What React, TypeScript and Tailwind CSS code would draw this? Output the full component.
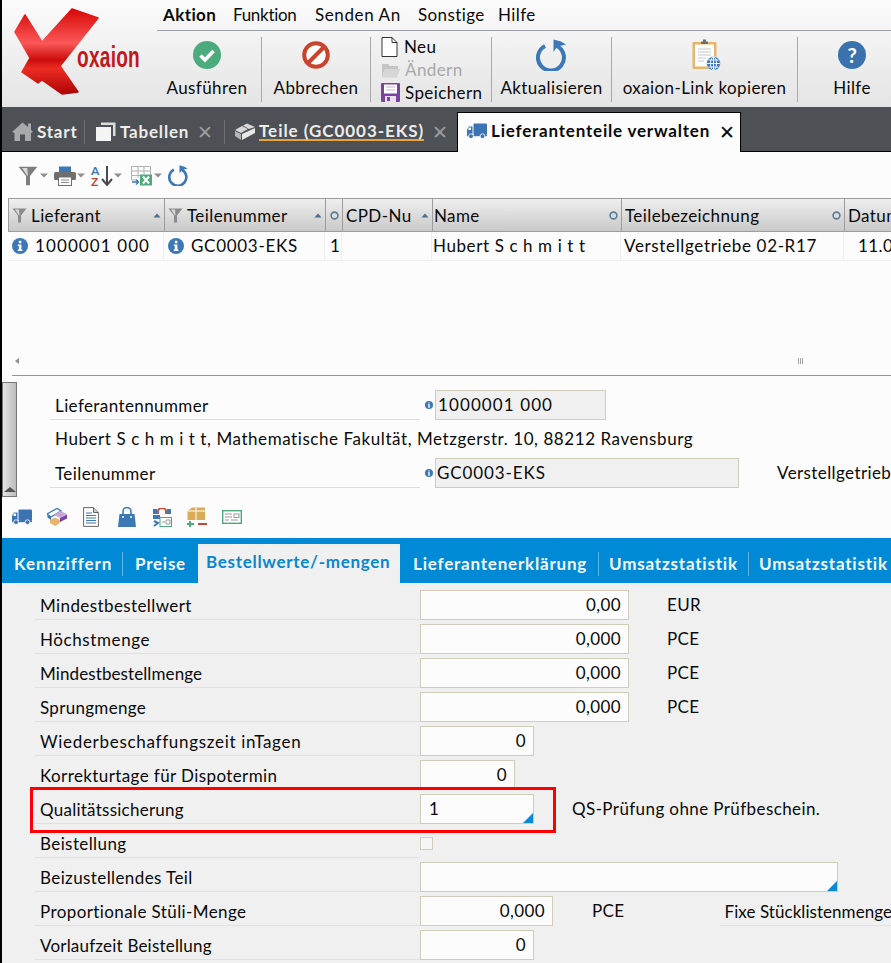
import React from "react";

const Truck = ({ w = 20, h = 16 }: { w?: number; h?: number }) => (
  <svg width={w} height={h} viewBox="0 0 20 16" className="shrink-0">
    <rect x="6.5" y="0.5" width="13.5" height="11.5" rx="1" fill="#3c74b3" />
    <path d="M0 12V6.5L2 3.5H5.5V12Z" fill="#3c74b3" />
    <path d="M1.5 7V5L2.7 4.5H4V7Z" fill="#fff" />
    <rect x="0" y="12" width="20" height="1.2" fill="#3c74b3" />
    <circle cx="4" cy="13.2" r="2.4" fill="#3c74b3" stroke="#fff" strokeWidth="0.8" />
    <circle cx="15.5" cy="13.2" r="2.4" fill="#3c74b3" stroke="#fff" strokeWidth="0.8" />
  </svg>
);

const Info = ({ s = 16 }: { s?: number }) => (
  <svg width={s} height={s} viewBox="0 0 16 16" className="shrink-0">
    <circle cx="8" cy="8" r="8" fill="#3c78b5" />
    <rect x="6.8" y="2.8" width="2.6" height="2.4" rx="0.6" fill="#fff" />
    <path d="M5.8 6.6H9.4V11.6H10.4V13H5.8V11.6H6.8V8H5.8Z" fill="#fff" />
  </svg>
);

const Funnel = ({ s = 15, c = "#8b8b8b" }: { s?: number; c?: string }) => (
  <svg width={s} height={s} viewBox="0 0 15 15" className="shrink-0">
    <path d="M0.5 0.5H14.5L9 7.5V14.5H6V7.5Z" fill={c} />
    <path d="M3 1.5H7L7.4 7L7 7.5Z" fill="#d8d8d8" />
  </svg>
);

const Caret = () => (
  <svg width="8" height="5" viewBox="0 0 8 5" className="shrink-0">
    <path d="M0 0.5H8L4 4.5Z" fill="#8d8d8d" />
  </svg>
);

const SortUp = () => (
  <svg width="8" height="5" viewBox="0 0 8 5" className="shrink-0">
    <path d="M4 0.5L7.5 4.5H0.5Z" fill="#4c6e8c" />
  </svg>
);

const Dot = () => (
  <svg width="9" height="9" viewBox="0 0 9 9" className="shrink-0">
    <circle cx="4.5" cy="4.5" r="3.4" fill="none" stroke="#5f7b92" strokeWidth="1.6" />
  </svg>
);

const Refresh = ({ s = 32, sw = 4 }: { s?: number; sw?: number }) => (
  <svg width={s} height={s} viewBox="0 0 32 32" className="shrink-0">
    <path d="M20.5 6.8A13 13 0 1 1 9 7" fill="none" stroke="#3c78b5" strokeWidth={sw} />
    <path d="M17.5 0.5V13L21.2 7.6L30 5.5L25 2.5Z" fill="#3c78b5" />
  </svg>
);

const Menu = ({ children, cls, w }: { children: string; cls?: string; w: string }) => (
  <span className={`${w} ${cls ?? ""} whitespace-nowrap`}>{children}</span>
);

const Sep = () => <div className="w-[1px] h-[65px] bg-[#a9a9a9] shrink-0 mt-[6px]" />;

const BigBtn = ({ w, label, icon, cls }: { w: string; label: string; icon: React.ReactNode; cls?: string }) => (
  <div className={`${w} ${cls ?? ""} shrink-0 flex flex-col items-center`}>
    <div className="h-[42px] mt-[3px] flex items-center justify-center">{icon}</div>
    <div className="mt-[2px] leading-[20px] whitespace-nowrap">{label}</div>
  </div>
);

const Row = ({
  label,
  labelCls,
  value,
  w,
  unit,
  unitClass,
  arrow,
  extra,
}: {
  label: string;
  labelCls?: string;
  value?: string;
  w?: string;
  unit?: string;
  unitClass?: string;
  arrow?: boolean;
  extra?: React.ReactNode;
}) => (
  <div className="flex h-[34px] shrink-0">
    <div className={`w-[385px] ml-[33px] h-[30px] pl-[5px] border-b border-[#e0e0e0] leading-[31px] shrink-0 whitespace-nowrap ${labelCls ?? ""}`}>
      {label}
    </div>
    {w ? (
      <div
        className={`${w} h-[30px] relative bg-[#fcfcfc] border border-[#cfcdb9] pl-[8px] pr-[7px] leading-[28px] shrink-0 ${
          arrow ? "text-left" : "text-right"
        }`}
      >
        {value}
        {arrow && (
          <span className="absolute right-0 bottom-0 w-0 h-0 border-l-[10px] border-l-transparent border-b-[10px] border-b-[#0a8ad6]" />
        )}
      </div>
    ) : (
      <div className="w-[13px] h-[13px] mt-[9px] border border-[#cfcdb9] bg-[#f6f6f6]" />
    )}
    {unit && <div className={`${unitClass ?? "ml-[38px]"} leading-[30px] whitespace-nowrap`}>{unit}</div>}
    {extra}
  </div>
);

const Th = ({ w, label, filter, end, hide, cls }: { w: string; label?: string; filter?: boolean; end: React.ReactNode; hide?: boolean; cls?: string }) => (
  <div className={`${w} ${cls ?? "pl-[3px]"} pr-[3px] pt-[1px] shrink-0 h-full flex items-center border-r border-[#9d9d9d] overflow-hidden ${hide ? "justify-center" : "justify-between"}`}>
    <div className="flex items-center gap-[4px] whitespace-nowrap">
      {filter && <Funnel />}
      {label && <span>{label}</span>}
    </div>
    {end}
  </div>
);

const Td = ({ w, children, cls }: { w: string; children?: React.ReactNode; cls?: string }) => (
  <div className={`${w} shrink-0 h-full flex items-center border-r border-[#efefef] whitespace-nowrap overflow-hidden ${cls ?? "gap-[6px] px-[3px]"}`}>
    {children}
  </div>
);

export default function App() {
  return (
    <div className="w-[891px] h-[963px] overflow-hidden relative border-l-2 border-black bg-[#fcfcfc] text-[#0a0a0a] text-[17px] tracking-[0.4px] font-['Lato','Open_Sans',sans-serif] flex flex-col">
      {/* Header */}
      <div className="h-[107px] shrink-0 flex bg-gradient-to-b from-[#fbfbfb] to-[#e4e4e4]">
        <div className="w-[155px] shrink-0">
          <svg width="155" height="107" viewBox="2 0 155 107">
            <defs>
              <linearGradient id="lg" x1="0" y1="0" x2="0" y2="1">
                <stop offset="0" stopColor="#d80606" />
                <stop offset="0.4" stopColor="#fb5858" />
                <stop offset="0.6" stopColor="#cc0c0c" />
                <stop offset="0.7" stopColor="#ec2c22" />
                <stop offset="1" stopColor="#ae0404" />
              </linearGradient>
            </defs>
            <path
              d="M25 15L42 42L72 9L98 18L60 66L78 92L62 94L42 80L38 83L22 72L30 58L15 32Z"
              fill="url(#lg)"
              stroke="url(#lg)"
              strokeWidth="1.5"
              strokeLinejoin="round"
            />
            <text x="77" y="67" fontFamily="'Liberation Sans',sans-serif" fontWeight="700" fontSize="29" fill="#c0181c" textLength="63" lengthAdjust="spacingAndGlyphs">oxaion</text>
          </svg>
        </div>
        <div className="flex-1 min-w-0 flex flex-col">
          <div className="h-[31px] shrink-0 border-b border-[#9aa0a6] flex items-center pl-[6px]">
            <Menu cls="font-bold" w="w-[70px]">Aktion</Menu>
            <Menu cls="tracking-[-0.3px]" w="w-[82px]">Funktion</Menu>
            <Menu cls="tracking-[0.6px]" w="w-[103px]">Senden An</Menu>
            <Menu w="w-[80px]">Sonstige</Menu>
            <Menu w="w-[50px]">Hilfe</Menu>
          </div>
          <div className="flex flex-1 min-h-0">
            <BigBtn
              w="w-[104px]"
              cls="pr-[4px]"
              label="Ausführen"
              icon={
                <svg width="28" height="28" viewBox="0 0 28 28">
                  <circle cx="14" cy="14" r="14" fill="#4bab7d" />
                  <path d="M7.5 14.5L12 19L20.5 10" fill="none" stroke="#fff" strokeWidth="3.6" />
                </svg>
              }
            />
            <Sep />
            <BigBtn
              w="w-[108px]"
              label="Abbrechen"
              icon={
                <svg width="28" height="28" viewBox="0 0 28 28">
                  <circle cx="14" cy="14" r="11.8" fill="#fff" stroke="#c9442c" strokeWidth="4" />
                  <path d="M6 22L22 6" stroke="#c9442c" strokeWidth="4" />
                </svg>
              }
            />
            <Sep />
            <div className="w-[120px] shrink-0 flex flex-col pl-[10px] pt-[4px]">
              <div className="h-[23px] flex items-center gap-[6px]">
                <svg width="17" height="20" viewBox="0 0 17 20" className="shrink-0">
                  <path d="M1 0.5H11L16 5.5V19.5H1Z" fill="#fff" stroke="#333" />
                  <path d="M11 0.5V5.5H16" fill="none" stroke="#333" />
                </svg>
                <span>Neu</span>
              </div>
              <div className="h-[23px] flex items-center gap-[5px] text-[#a9a9a9]">
                <svg width="19" height="16" viewBox="0 0 19 16" className="shrink-0">
                  <path d="M1 2H7L9 4H17V7H4L1 15Z" fill="#c4c4c4" />
                  <path d="M4 7H19L16 15.5H1Z" fill="#d6d6d6" />
                </svg>
                <span>Ändern</span>
              </div>
              <div className="h-[23px] flex items-center gap-[5px]">
                <svg width="19" height="19" viewBox="0 0 19 19" className="shrink-0">
                  <rect width="19" height="19" rx="1" fill="#7c41a4" />
                  <rect x="3" y="1.5" width="13" height="9" fill="#fff" />
                  <path d="M5 4H14M5 7H14" stroke="#c9b2d8" strokeWidth="1.2" />
                  <rect x="4" y="13" width="11" height="6" fill="#e9e0ef" />
                  <rect x="6" y="14" width="3" height="4" fill="#7c41a4" />
                </svg>
                <span>Speichern</span>
              </div>
            </div>
            <Sep />
            <BigBtn w="w-[119px]" label="Aktualisieren" icon={<Refresh />} />
            <Sep />
            <BigBtn
              w="w-[185px]"
              label="oxaion-Link kopieren"
              icon={
                <svg width="29" height="32" viewBox="0 0 29 32" className="ml-[4px]">
                  <rect x="0.5" y="3" width="24" height="27" rx="1" fill="#e7b469" />
                  <rect x="3" y="5.5" width="19" height="22" fill="#fff" />
                  <path d="M6 10H19M6 13H19M6 16H19M6 19H14M6 22H12" stroke="#c4c4c4" strokeWidth="1" />
                  <path d="M9 5V2.5H11V0.5H14V2.5H16V5Z" fill="#6e6e6e" />
                  <circle cx="21.5" cy="24.5" r="7" fill="#3c78b5" stroke="#fff" strokeWidth="0.6" />
                  <path d="M15 24.5H28M21.5 18V31M16.5 21H26.5M16.5 28H26.5" stroke="#fff" strokeWidth="0.9" />
                  <ellipse cx="21.5" cy="24.5" rx="3" ry="6.5" fill="none" stroke="#fff" strokeWidth="0.9" />
                </svg>
              }
            />
            <Sep />
            <BigBtn
              w="w-[93px]"
              cls="pl-[15px]"
              label="Hilfe"
              icon={
                <div className="w-[28px] h-[28px] rounded-full bg-[#3a72ae] text-white font-bold text-[21px] leading-[28px] text-center tracking-normal">?</div>
              }
            />
          </div>
        </div>
      </div>

      {/* Dark tab bar */}
      <div className="h-[45px] shrink-0 bg-[#4d5054] border-b border-black flex items-end font-bold text-[#ececec] tracking-[0.8px]">
        <div className="flex items-center h-[39px] w-[455px] shrink-0">
          <div className="flex items-center gap-[4px] pl-[10px] w-[82px] shrink-0">
            <svg width="21" height="19" viewBox="0 0 21 19" className="shrink-0">
              <path d="M0 10L10.5 0.5L16 5V1.5H19V8L21 10L19 11V19H13V12.5H8V19H2.5V11Z" fill="#a7a9ab" />
            </svg>
            <span>Start</span>
          </div>
          <div className="w-[1px] h-[24px] bg-[#6d7074] shrink-0" />
          <div className="flex items-center pl-[11px] gap-[4px] w-[139px] shrink-0">
            <svg width="20" height="19" viewBox="0 0 20 19" className="shrink-0">
              <path d="M5 0.5H19.5V14H17V3H5Z" fill="#dcdcdc" />
              <rect x="0" y="5" width="15" height="14" fill="#f4f4f4" />
            </svg>
            <span>Tabellen</span>
            <span className="ml-[4px] text-[#9a9c9e] font-normal text-[19px] leading-none tracking-normal">✕</span>
          </div>
          <div className="w-[1px] h-[24px] bg-[#6d7074] shrink-0" />
          <div className="flex items-center pl-[10px] gap-[3px]">
            <svg width="21" height="18" viewBox="0 0 21 18" className="shrink-0">
              <path d="M0 7L7 3L13 6L6 10Z M8 2.5L12 0.5L20 4L14 6Z" fill="#d8d8d8" />
              <path d="M0 8L6 11V17L0 13Z" fill="#b4b4b4" />
              <path d="M7 11L20 5V10L7 17Z" fill="#e8e8e8" />
            </svg>
            <span className="border-b-2 border-[#e8a33d] leading-[16px] whitespace-nowrap tracking-[0.95px]">Teile (GC0003-EKS)</span>
            <span className="ml-[5px] text-[#9a9c9e] font-normal text-[19px] leading-none tracking-normal">✕</span>
          </div>
        </div>
        <div className="w-[284px] shrink-0 h-[40px] mb-[-1px] bg-[#fcfcfc] border border-black border-b-0 flex items-center pl-[9px] pb-[3px] gap-[4px] text-[#0a0a0a] whitespace-nowrap">
          <Truck />
          <span>Lieferantenteile verwalten</span>
          <span className="ml-[5px] font-normal text-[19px] leading-none tracking-normal">✕</span>
        </div>
      </div>

      {/* Toolbar */}
      <div className="h-[46px] shrink-0 flex items-center pl-[16px] gap-[4px] pt-[1px]">
        <div className="flex items-center gap-[2px] w-[32px]">
          <Funnel s={20} c="#7d7d7d" />
          <Caret />
        </div>
        <div className="flex items-center gap-[1px] w-[33px]">
          <svg width="22" height="20" viewBox="0 0 22 20" className="shrink-0">
            <rect x="5" y="0.5" width="12" height="6" fill="#3c78b5" />
            <rect x="0" y="6" width="22" height="8" rx="1.5" fill="#6f6f6f" />
            <rect x="4.5" y="11" width="13" height="8.5" fill="#fff" stroke="#6f6f6f" />
            <path d="M7 14H15M7 16.5H15" stroke="#8a8a8a" />
          </svg>
          <Caret />
        </div>
        <div className="flex items-center w-[36px] relative h-[22px]">
          <span className="absolute left-0 top-0 text-[12px] leading-[11px] font-bold text-[#3c78b5] tracking-normal">A</span>
          <span className="absolute left-0 top-[11px] text-[12px] leading-[11px] font-bold text-[#c04a30] tracking-normal">Z</span>
          <svg width="12" height="20" viewBox="0 0 12 20" className="absolute left-[10px] top-[1px]">
            <path d="M6 0V18M1 13L6 19L11 13" fill="none" stroke="#4a4a4a" strokeWidth="2" />
          </svg>
          <span className="absolute left-[23px] top-[8px]"><Caret /></span>
        </div>
        <div className="flex items-center gap-[1px] w-[33px]">
          <svg width="22" height="20" viewBox="0 0 22 20" className="shrink-0">
            <path d="M0.5 0.5H19.5V10M0.5 0.5V14H6M7 0.5V12M13 0.5V8M0.5 5H19M0.5 9.5H13" fill="none" stroke="#b0b0b0" />
            <rect x="9" y="8.5" width="12" height="11" fill="#4bab7d" />
            <path d="M12 10.5L18 17.5M18 10.5L12 17.5" stroke="#fff" strokeWidth="2" />
            <path d="M1 16H7M5 13.5L7.5 16L5 18.5" fill="none" stroke="#3c78b5" strokeWidth="1.3" />
          </svg>
          <Caret />
        </div>
        <Refresh s={21} sw={4} />
      </div>

      {/* Table */}
      <div className="h-[177px] shrink-0 relative overflow-hidden">
        <div className="ml-[6px] h-[34px] flex border border-[#9d9d9d] border-r-0 bg-gradient-to-b from-[#efefef] to-[#c9c9c9] w-[900px]">
          <Th w="w-[156px]" label="Lieferant" filter end={<SortUp />} />
          <Th w="w-[161px]" label="Teilenummer" filter end={<SortUp />} />
          <Th w="w-[17px]" end={<Dot />} hide />
          <Th w="w-[90px]" label="CPD-Nu" end={<SortUp />} />
          <Th w="w-[189px]" cls="pl-[1px]" label="Name" end={<Dot />} />
          <Th w="w-[223px]" label="Teilebezeichnung" end={<Dot />} />
          <div className="px-[3px] leading-[33px]">Datum</div>
        </div>
        <div className="ml-[6px] h-[29px] flex border-b border-[#eeeeee] w-[900px]">
          <Td w="w-[156px]" cls="gap-[7px] pl-[4px]"><Info /><span className="tracking-[1.1px]">1000001 000</span></Td>
          <Td w="w-[161px]" cls="gap-[7px] pl-[4px]"><Info /><span className="tracking-[0.7px]">GC0003-EKS</span></Td>
          <Td w="w-[17px]"><span className="pl-[2px]">1</span></Td>
          <Td w="w-[90px]" />
          <Td w="w-[189px]" cls="pl-[1px]"><span className="tracking-[0.6px]">Hubert S c h m i t t</span></Td>
          <Td w="w-[223px]"><span className="tracking-[0.65px]">Verstellgetriebe 02-R17</span></Td>
          <div className="pl-[14px] leading-[28px]">11.0</div>
        </div>
        <div className="absolute left-[13px] top-[160px] w-0 h-0 border-y-[3px] border-y-transparent border-r-[4px] border-r-[#8e8e8e]" />
        <div className="absolute left-[796px] top-[160px] w-[5px] h-[6px] border-x border-[#a4a4a4] bg-[linear-gradient(90deg,transparent_40%,#a4a4a4_40%,#a4a4a4_60%,transparent_60%)]" />
      </div>
      <div className="h-[1px] shrink-0 ml-[10px] bg-[#8e959c]" />

      {/* Form */}
      <div className="h-[121px] shrink-0 flex">
        <div className="w-[15px] h-[115px] mt-[6px] shrink-0 border border-[#777] bg-gradient-to-r from-[#e4e4e4] to-[#bcbcbc] flex items-end justify-center pb-[4px]">
          <div className="w-0 h-0 border-x-[6px] border-x-transparent border-b-[5px] border-b-[#555]" />
        </div>
        <div className="flex-1 min-w-0 pl-[33px] pt-[14px] whitespace-nowrap">
          <div className="flex h-[30px]">
            <div className="w-[370px] shrink-0 pl-[5px] border-b border-[#dedfd5] leading-[32px]">Lieferantennummer</div>
            <div className="w-[15px] shrink-0 flex items-center pl-[5px]"><Info s={8} /></div>
            <div className="w-[171px] shrink-0 bg-[#f0f0f0] border border-[#cfcdb9] pl-[2px] leading-[28px] tracking-[1.1px]">1000001 000</div>
          </div>
          <div className="h-[38px] pl-[5px] leading-[38px] tracking-[0.57px]">Hubert S c h m i t t, Mathematische Fakultät, Metzgerstr. 10, 88212 Ravensburg</div>
          <div className="flex h-[30px]">
            <div className="w-[370px] shrink-0 pl-[5px] border-b border-[#dedfd5] leading-[32px]">Teilenummer</div>
            <div className="w-[15px] shrink-0 flex items-center pl-[5px]"><Info s={8} /></div>
            <div className="w-[304px] shrink-0 bg-[#f0f0f0] border border-[#cfcdb9] pl-[1px] leading-[28px] tracking-[0.9px]">GC0003-EKS</div>
            <div className="ml-[38px] leading-[30px]">Verstellgetriebe 02-R17</div>
          </div>
        </div>
      </div>

      {/* Icon row */}
      <div className="h-[41px] shrink-0 flex items-center pl-[10px] pb-[1px]">
        <div className="w-[35px] shrink-0"><Truck /></div>
        <div className="w-[36px] shrink-0">
          <svg width="20" height="18" viewBox="0 0 20 18">
            <path d="M0 6L10 0.5L14 3L4 9Z" fill="#fff" stroke="#3c78b5" strokeWidth="1.4" />
            <path d="M0.5 6.5L4 9V12L0.5 9.5Z" fill="#3c78b5" />
            <path d="M13 3L20 6L13 10L7 7Z" fill="#c7a6d8" />
            <path d="M20 6.5V10.5L13 14V10Z" fill="#7c41a4" />
            <path d="M3 12L8 9.5L13 12V15L8 18L3 15Z" fill="#e7b469" />
          </svg>
        </div>
        <div className="w-[35px] shrink-0">
          <svg width="16" height="20" viewBox="0 0 16 20">
            <path d="M0.6 0.6H10.5L15.4 5.5V19.4H0.6Z" fill="#fff" stroke="#666" />
            <path d="M10.5 0.6V5.5H15.4" fill="#ccc" stroke="#666" />
            <path d="M3 6H9M3 8.5H13M3 11H13M3 13.5H13M3 16H13" stroke="#3c78b5" />
          </svg>
        </div>
        <div className="w-[35px] shrink-0">
          <svg width="18" height="20" viewBox="0 0 18 20">
            <path d="M1.5 7H16.5L18 20H0Z" fill="#3c78b5" />
            <path d="M5 8V4.5A4 4 0 0 1 13 4.5V8" fill="none" stroke="#3c78b5" strokeWidth="1.6" />
            <circle cx="5" cy="10" r="1" fill="#fff" />
            <circle cx="13" cy="10" r="1" fill="#fff" />
          </svg>
        </div>
        <div className="w-[34px] shrink-0">
          <svg width="19" height="19" viewBox="0 0 19 19">
            <rect x="0" y="1" width="4" height="5" fill="#3c78b5" />
            <rect x="14" y="1" width="4" height="5" fill="#3c78b5" />
            <path d="M5 6V3A4 3 0 0 1 13 3V6" fill="none" stroke="#c9442c" strokeWidth="1.8" />
            <rect x="0" y="7" width="7" height="4" fill="#3c78b5" />
            <path d="M1 13L5 15L1 18" fill="none" stroke="#3c78b5" strokeWidth="2" />
            <rect x="7" y="9.5" width="11.5" height="9" fill="#fff" stroke="#4bab7d" />
            <path d="M9 14H12M13 12H17V16H13Z" fill="none" stroke="#999" />
          </svg>
        </div>
        <div className="w-[35px] shrink-0">
          <svg width="20" height="20" viewBox="0 0 20 20">
            <path d="M0.5 4L5 0.5H18V13H0.5Z" fill="#d9ab55" />
            <path d="M9 0.5V13M0.5 4H18" stroke="#fff" strokeWidth="1" />
            <path d="M3 14V20M0 17H7" stroke="#4bab7d" strokeWidth="2" />
            <path d="M11 17H20" stroke="#c9442c" strokeWidth="2" />
          </svg>
        </div>
        <div className="shrink-0">
          <svg width="20" height="14" viewBox="0 0 20 14">
            <rect x="0.7" y="0.7" width="18.6" height="12.6" fill="#fff" stroke="#4bab7d" strokeWidth="1.4" />
            <path d="M3 4H10M3 7H10M3 10H7M9 10H16" stroke="#999" />
            <rect x="12" y="4" width="5" height="3.5" fill="none" stroke="#999" />
          </svg>
        </div>
      </div>

      {/* Blue tabs */}
      <div className="h-[45px] shrink-0 bg-[#008ad6] flex items-end font-bold text-[#f3f8fb] whitespace-nowrap tracking-[0.75px]">
        <div className="h-[39px] flex items-center shrink-0">
          <span className="w-[120px] pl-[12px] tracking-[0.9px]">Kennziffern</span>
          <span className="w-[1px] h-[24px] bg-[#62b4e4]" />
          <span className="w-[75px] pl-[12px]">Preise</span>
        </div>
        <div className="w-[202px] h-[39px] shrink-0 bg-[#f0f0f0] text-[#0a86cf] pl-[8px] leading-[36px] tracking-[0.7px]">Bestellwerte/-mengen</div>
        <div className="h-[39px] flex items-center shrink-0">
          <span className="w-[198px] pl-[13px] tracking-[0.8px]">Lieferantenerklärung</span>
          <span className="w-[1px] h-[24px] bg-[#62b4e4]" />
          <span className="w-[149px] pl-[10px] tracking-[0.8px]">Umsatzstatistik</span>
          <span className="w-[1px] h-[24px] bg-[#62b4e4]" />
          <span className="pl-[10px] tracking-[0.8px]">Umsatzstatistik</span>
        </div>
      </div>

      {/* Detail form */}
      <div className="flex-1 min-h-0 bg-[#f0f0f0] pt-[7px] relative">
        <Row label="Mindestbestellwert" value="0,00" w="w-[209px]" unit="EUR" />
        <Row label="Höchstmenge" labelCls="tracking-[0.6px]" value="0,000" w="w-[209px]" unit="PCE" />
        <Row label="Mindestbestellmenge" labelCls="tracking-[0.1px]" value="0,000" w="w-[209px]" unit="PCE" />
        <Row label="Sprungmenge" labelCls="tracking-[0.3px]" value="0,000" w="w-[209px]" unit="PCE" />
        <Row label="Wiederbeschaffungszeit inTagen" labelCls="tracking-[0.7px]" value="0" w="w-[114px]" />
        <Row label="Korrekturtage für Dispotermin" value="0" w="w-[95px]" />
        <Row label="Qualitätssicherung" labelCls="tracking-[0.25px]" value="1" w="w-[114px]" arrow unit="QS-Prüfung ohne Prüfbeschein." />
        <Row label="Beistellung" />
        <Row label="Beizustellendes Teil" w="w-[418px]" arrow />
        <Row
          label="Proportionale Stüli-Menge"
          value="0,000"
          w="w-[133px]"
          unit="PCE"
          unitClass="ml-[39px]"
          extra={<div className="ml-[95px] pl-[5px] w-[180px] h-[30px] border-b border-[#e0e0e0] leading-[31px] whitespace-nowrap tracking-[0.05px]">Fixe Stücklistenmenge</div>}
        />
        <Row label="Vorlaufzeit Beistellung" labelCls="tracking-[0.2px]" value="0" w="w-[114px]" />
        <div className="absolute left-[28px] top-[204px] w-[526px] h-[46px] border-[3px] border-[#ff0000] pointer-events-none" />
      </div>
    </div>
  );
}
